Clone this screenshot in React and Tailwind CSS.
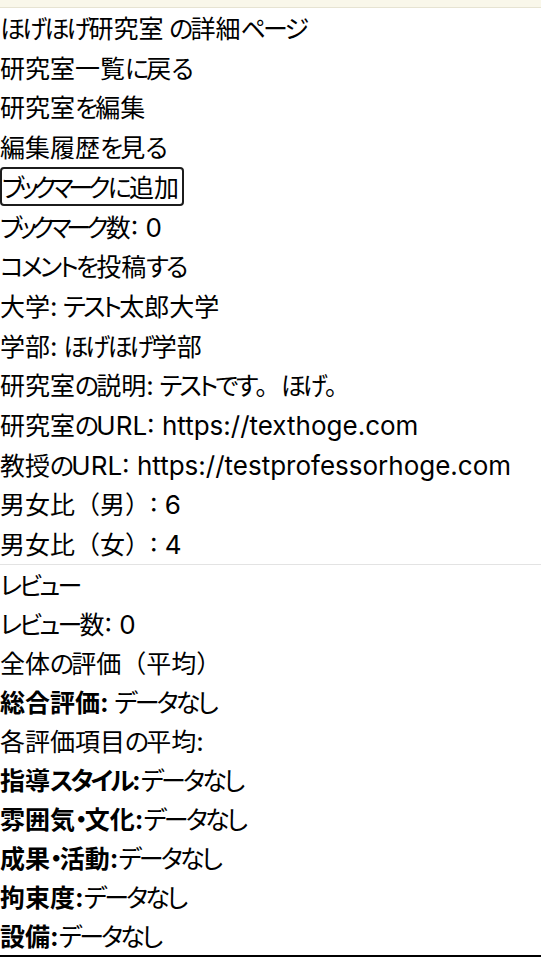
// kana runs are set tighter, ascii runs in Inter, like the source rendering
const KANA = /(ブックマー|[ぁ-ゖァ-ヺー・]+|[!-~](?:[ -~]*[!-~])?)/;

const T = ({ children }) =>
  String(children)
    .split(KANA)
    .map((part, i) => {
      if (!part) return null;
      if (part === "ブックマー")
        return (
          <span key={i} className="[font-feature-settings:'palt'] tracking-[-5px]">
            {part}
          </span>
        );
      if (/^[ぁ-ゖァ-ヺー・]+$/.test(part))
        return (
          <span key={i} className="[font-feature-settings:'palt'] tracking-[-2.8px]">
            {part}
          </span>
        );
      if (/^[!-~]/.test(part))
        return (
          <span key={i} className="[font-family:Inter,sans-serif] text-[26px] leading-none">
            {part}
          </span>
        );
      return <span key={i}>{part}</span>;
    });

const Line = ({ children }) => (
  <div className="leading-[39.7px]">
    <T>{children}</T>
  </div>
);

const Row = ({ children }) => (
  <div className="leading-[39px]">
    <T>{children}</T>
  </div>
);

const Rated = ({ label, children }) => (
  <div className="leading-[39px]">
    <span className="font-bold">
      <T>{label}</T>
    </span>
    <T>{children}</T>
  </div>
);

export default function App() {
  return (
    <div className="min-h-[958px] bg-white text-black text-[25px] [font-family:'Noto_Sans_CJK_JP','Noto_Sans',sans-serif]">
      <div className="h-2 bg-[#f9f7ea] border-b border-[#e6e3d2]" />
      <div>
        <Line>ほげほげ研究室 の詳細ページ</Line>
        <Line>研究室一覧に戻る</Line>
        <Line>研究室を編集</Line>
        <Line>編集履歴を見る</Line>
        <div className="h-[39.7px] flex items-center">
          <button className="h-[39px] border-2 border-[#1c1c1c] rounded-[4px] pl-0 pr-[3px] leading-none">
            <T>ブックマークに追加</T>
          </button>
        </div>
        <Line>ブックマーク数: 0</Line>
        <Line>コメントを投稿する</Line>
        <Line>大学: テスト太郎大学</Line>
        <Line>学部: ほげほげ学部</Line>
        <Line>研究室の説明: テストです。ほげ。</Line>
        <Line>研究室のURL: https://texthoge.com</Line>
        <Line>教授のURL: https://testprofessorhoge.com</Line>
        <Line>男女比（男）: 6</Line>
        <Line>男女比（女）: 4</Line>
      </div>
      <div className="border-t border-[#e3e3e3] border-b-2 border-b-black">
        <Row>レビュー</Row>
        <Row>レビュー数: 0</Row>
        <Row>全体の評価（平均）</Row>
        <Rated label="総合評価:"> データなし</Rated>
        <Row>各評価項目の平均:</Row>
        <Rated label="指導スタイル:">データなし</Rated>
        <Rated label="雰囲気・文化:">データなし</Rated>
        <Rated label="成果・活動:">データなし</Rated>
        <Rated label="拘束度:">データなし</Rated>
        <Rated label="設備:">データなし</Rated>
      </div>
    </div>
  );
}
